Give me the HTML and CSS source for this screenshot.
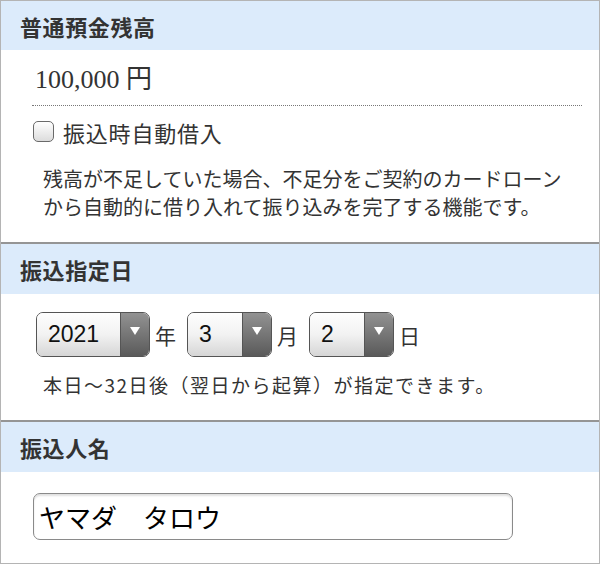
FILE: index.html
```html
<!DOCTYPE html>
<html lang="ja">
<head>
  <meta charset="UTF-8" />
  <meta name="viewport" content="width=device-width, initial-scale=1.0"/>
  <title>振込入力</title>
  <link rel="stylesheet" href="styles.css">
</head>
<body>
  <div class="frame">
    <section class="section first">
      <h2 class="section-head">普通預金残高</h2>
      <div class="section-body balance-body">
        <div class="amount">100,000 円</div>
        <label class="check-row">
          <input type="checkbox" class="check">
          <span>振込時自動借入</span>
        </label>
        <p class="note desc">残高が不足していた場合、不足分をご契約のカードローンから自動的に借り入れて振り込みを完了する機能です。</p>
      </div>
    </section>

    <section class="section">
      <h2 class="section-head">振込指定日</h2>
      <div class="section-body date-body">
        <div class="date-row">
          <div class="select year">
            <span class="select-value">2021</span>
            <span class="select-arrow"></span>
          </div>
          <span class="unit">年</span>
          <div class="select short">
            <span class="select-value">3</span>
            <span class="select-arrow"></span>
          </div>
          <span class="unit">月</span>
          <div class="select short">
            <span class="select-value">2</span>
            <span class="select-arrow"></span>
          </div>
          <span class="unit">日</span>
        </div>
        <p class="note hint">本日〜32日後（翌日から起算）が指定できます。</p>
      </div>
    </section>

    <section class="section">
      <h2 class="section-head">振込人名</h2>
      <div class="section-body name-body">
        <input type="text" class="name-input" value="ヤマダ　タロウ">
      </div>
    </section>
  </div>
</body>
</html>
```

FILE: styles.css
```css
* {
  box-sizing: border-box;
  margin: 0;
  padding: 0;
}

body {
  font-family: "Noto Sans CJK JP", sans-serif;
  color: #333;
  background: #fff;
}

.frame {
  width: 600px;
  height: 564px;
  border: 1px solid #b4b4b4;
  overflow: hidden;
}

.section {
  border-top: 2px solid #959595;
}

.section.first {
  border-top: none;
}

.section-head {
  height: 50px;
  background: #dcebfb;
  display: flex;
  align-items: center;
  padding-left: 19px;
  font-size: 22px;
  letter-spacing: 0.6px;
  font-weight: 700;
  color: #333;
}

.first .section-head {
  height: 49px;
}

/* balance */
.balance-body {
  padding: 0 17px 0 31px;
  height: 192px;
}

.amount {
  height: 56px;
  padding: 12px 0 0 3px;
  font-family: "Liberation Serif", "Noto Sans CJK JP", serif;
  font-size: 26px;
  line-height: 36px;
  border-bottom: 1px dotted #777;
}

.check-row {
  display: flex;
  align-items: center;
  gap: 9px;
  height: 54px;
  font-size: 22px;
  letter-spacing: 0.8px;
  padding-bottom: 3px;
}

.check {
  appearance: none;
  width: 21px;
  height: 21px;
  border: 1.5px solid #6a6a6a;
  border-radius: 5px;
  background: linear-gradient(#fff, #dcdcdc);
  margin-left: 1px;
}

.note {
  font-size: 19px;
  line-height: 28px;
}

.desc {
  font-size: 20px;
  padding: 5px 20px 0 11px;
}

/* date */
.date-body {
  padding: 18px 0 0 35px;
  height: 126px;
}

.date-row {
  display: flex;
  align-items: center;
}

.select {
  display: flex;
  height: 45px;
  border: 1px solid #555;
  border-radius: 7px;
  overflow: hidden;
}

.select.year {
  width: 114px;
}

.select.short {
  width: 85px;
}

.select-value {
  flex: 1;
  display: flex;
  align-items: center;
  padding-left: 11px;
  font-family: "Liberation Sans", sans-serif;
  font-size: 23px;
  color: #111;
  background: linear-gradient(#fefefe, #f2f2f2 50%, #d6d6d6);
}

.select-arrow {
  width: 29px;
  border-left: 1px solid #555;
  background: linear-gradient(#929292, #5a5a5a);
  display: flex;
  justify-content: center;
  align-items: center;
}

.select-arrow::after {
  content: "";
  border-left: 5px solid transparent;
  border-right: 5px solid transparent;
  border-top: 8px solid #fff;
  margin-bottom: 7px;
}

.unit {
  font-size: 21px;
  margin: 0 11px 0 5px;
}

.hint {
  font-size: 19px;
  letter-spacing: 1.5px;
  padding: 14px 0 0 7px;
}

/* name */
.name-body {
  padding: 21px 0 0 32px;
}

.name-input {
  width: 480px;
  height: 47px;
  border: 1.5px solid #8a8a8a;
  border-radius: 7px;
  box-shadow: inset 0 2px 2px rgba(0, 0, 0, 0.12);
  padding-left: 5px;
  font-family: "Noto Sans CJK JP", sans-serif;
  font-size: 26px;
  color: #000;
  outline: none;
}
```
